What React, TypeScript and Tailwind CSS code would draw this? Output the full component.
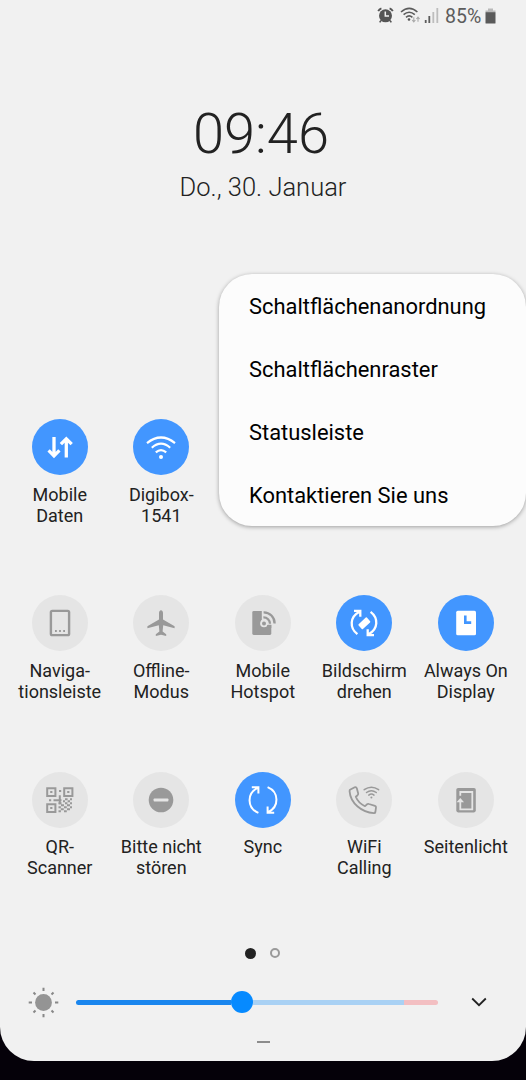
import type { ReactNode } from "react";
import clsx from "clsx";

type Tile = {
  label: string[];
  active?: boolean;
  icon: ReactNode;
};

const GREY = "#999999";
const OFF = "#e5e5e5";
const BLUE = "#4296ff";

const topTiles: Tile[] = [
  {
    label: ["Mobile", "Daten"],
    active: true,
    icon: (
      <g fill="none" stroke="#fff" strokeWidth="3.3">
        <path d="M22 18V37M16.6 31.4L22 36.8L27.4 31.4" />
        <path d="M34.3 38.6V20M28.9 25.2L34.3 19.8L39.7 25.2" />
      </g>
    ),
  },
  {
    label: ["Digibox-", "1541"],
    active: true,
    icon: (
      <g fill="none" stroke="#fff" strokeWidth="2.2">
        <path d="M14 24.2Q28 12.8 42 24.2" />
        <path d="M18.8 28.8Q28 20.6 37.2 28.8" />
        <path d="M22.8 33.4Q28 28.8 33.2 33.4" />
        <circle cx="28" cy="38" r="2" fill="#fff" stroke="none" />
      </g>
    ),
  },
];

const tiles: Tile[] = [
  {
    label: ["Naviga-", "tionsleiste"],
    icon: (
      <g>
        <rect x="18.9" y="15.9" width="18.2" height="24.2" rx="1.4" fill="none" stroke={GREY} strokeWidth="2.4" />
        <path d="M23 36h1.8M27.1 36h1.8M31.2 36h1.8" stroke={GREY} strokeWidth="1.8" />
      </g>
    ),
  },
  {
    label: ["Offline-", "Modus"],
    icon: (
      <path
        fill={GREY}
        d="M28 15.2C29.3 15.2 30 16.6 30 18.2V24.5L41.6 31.2V33.3L30.2 30.3L29.6 36.6L33.2 39.2V41L28 39.8L22.8 41V39.2L26.4 36.6L25.8 30.3L14.4 33.3V31.2L26 24.5V18.2C26 16.6 26.7 15.2 28 15.2Z"
      />
    ),
  },
  {
    label: ["Mobile", "Hotspot"],
    icon: (
      <g fill="none">
        <rect x="17.3" y="16" width="19" height="24" rx="1.4" fill={GREY} />
        <path d="M26.8 15H41V29.8H32Q31.6 32 29 32A3.4 3.4 0 0 1 25.8 27.4L26.8 25Z" fill={OFF} />
        <circle cx="29" cy="28.4" r="3.8" fill={OFF} />
        <circle cx="29" cy="28.4" r="2" fill={GREY} />
        <path d="M28.4 22.4A6.4 6.4 0 0 1 35 28.8" stroke={GREY} strokeWidth="2.3" />
        <path d="M28.6 17.4A10.8 10.8 0 0 1 39.6 28.4" stroke={GREY} strokeWidth="2.3" />
        <path d="M32.2 30H36.3V33H32.2Z" fill={GREY} />
      </g>
    ),
  },
  {
    label: ["Bildschirm", "drehen"],
    active: true,
    icon: (
      <g fill="none" stroke="#fff" strokeWidth="2.3">
        <path d="M21.4 39.2C13.4 33 13.6 22 23.4 16.8M18 15.9H24.3V21.8" />
        <path d="M34.6 16.8C42.6 23 42.4 34 32.6 39.2M38 40.1H31.7V34.2" />
        <path d="M23.2 29.9L30.3 23.1L33.5 26.8L26.4 33.4Z" fill="#fff" strokeWidth="1.6" strokeLinejoin="round" />
      </g>
    ),
  },
  {
    label: ["Always On", "Display"],
    active: true,
    icon: (
      <g>
        <rect x="18.2" y="15.7" width="19.8" height="24.6" rx="1.6" fill="#fff" />
        <path d="M27.3 20.6V27.6H33.2" fill="none" stroke={BLUE} strokeWidth="2.6" />
      </g>
    ),
  },
  {
    label: ["QR-", "Scanner"],
    icon: (
      <g fill="none" stroke={GREY} strokeWidth="2">
        <path d="M15.2 16.2h8.2v7.8h-8.2zM32.2 16.2h8.2v7.8h-8.2zM15.2 32.2h8.2v7.8h-8.2z" />
        <path d="M18.2 20.1h2.2M35.2 20.1h2.2M18.2 36.1h2.2M27 19h2.2M17 28.3h2.2M21.5 28.3h8M27.8 23.2v9M33 27.3h2.6M38 27.3h2" />
        <path d="M31 29.2h2M35.6 29.2h2.4M26.5 31.2h3M33 31.2h2.4M38 31.2h2M29 33.2h3M35 33.2h3M26.5 35.2h2.4M32 35.2h2.8M38 35.2h2M28.8 37.2h3M35 37.2h3M26.5 39.2h2.4M32 39.2h2.8" />
      </g>
    ),
  },
  {
    label: ["Bitte nicht", "stören"],
    icon: (
      <g>
        <circle cx="28" cy="28" r="12.3" fill={GREY} />
        <rect x="20.6" y="26.5" width="14.8" height="3" rx="0.8" fill={OFF} />
      </g>
    ),
  },
  {
    label: ["Sync"],
    active: true,
    icon: (
      <g fill="none" stroke="#fff" strokeWidth="2">
        <path d="M23.4 40.8C11.8 36 11.6 21 22.9 15.9M16.8 15.2H23.4V21.6" />
        <path d="M32.6 15.2C44.2 20 44.4 35 33.1 40.1M39.2 40.8H32.6V34.4" />
      </g>
    ),
  },
  {
    label: ["WiFi", "Calling"],
    icon: (
      <g fill="none" stroke={GREY} strokeWidth="1.8" strokeLinejoin="round" strokeLinecap="round">
        <path d="M14 17.7L18.7 15.3Q20.3 14.8 20.8 16.2L22.2 21.5Q22.4 22.7 21.3 23.5L19.8 24.8Q22.2 31 29 34.2L31 32.3Q31.8 31.6 33 32L39 33.8Q40.2 34.2 40 35.4L39.4 40Q39.2 41.2 37.8 41.1C26 40.4 14.5 31.5 13.6 19.4Q13.5 18.1 14 17.7Z" />
        <g strokeWidth="1.5">
          <path d="M28.2 17.7Q35.4 12.7 42.6 17.7" />
          <path d="M30.5 20.5Q35.4 17 40.3 20.5" />
          <path d="M32.8 23.1Q35.4 21.1 38 23.1" />
        </g>
        <circle cx="35.4" cy="25.4" r="1" fill={GREY} stroke="none" />
      </g>
    ),
  },
  {
    label: ["Seitenlicht"],
    icon: (
      <g>
        <rect x="18.3" y="16" width="19.5" height="24.4" rx="1.8" fill={GREY} />
        <path d="M22.3 23.8V20H34.3V37.3H22.3V29" fill="none" stroke={OFF} strokeWidth="1.8" />
        <path d="M22.3 25.9L26 30.2H18.6Z" fill={OFF} />
      </g>
    ),
  },
];

const menuItems = ["Schaltflächenanordnung", "Schaltflächenraster", "Statusleiste", "Kontaktieren Sie uns"];

const QuickTile = ({ tile }: { tile: Tile }) => (
  <div className="flex flex-col items-center">
    <div className={clsx("size-14 rounded-full", tile.active ? "bg-[#4296ff]" : "bg-[#e5e5e5]")}>
      <svg width="56" height="56" viewBox="0 0 56 56">
        {tile.icon}
      </svg>
    </div>
    <div className="mt-[8.2px] text-center text-[18px] leading-[21px] whitespace-nowrap text-[#222]">
      {tile.label.map((line) => (
        <div key={line}>{line}</div>
      ))}
    </div>
  </div>
);

const StatusBar = () => (
  <div className="flex h-8 items-center justify-end pr-[30px] text-[#5c5c5c]">
    <svg width="62" height="20" viewBox="377 6 62 20" fill="none">
      <circle cx="385.5" cy="15.8" r="6.5" fill="#555" />
      <path d="M378.2 11.2Q379.2 9 381.4 8.3M392.8 11.2Q391.8 9 389.6 8.3" stroke="#555" strokeWidth="1.8" />
      <path d="M381 20.5L379.7 22.4M390 20.5L391.3 22.4" stroke="#555" strokeWidth="1.6" />
      <path d="M385.3 11.5V16H389" stroke="#f1f1f1" strokeWidth="1.5" />
      <g stroke="#5c5c5c" strokeWidth="1.6">
        <path d="M401 12Q409.2 4.8 417.4 12" />
        <path d="M403.6 14.7Q409.2 9.8 414.8 14.7" />
        <path d="M406 17.3Q409.2 14.5 412.4 17.3" />
      </g>
      <circle cx="409" cy="19.5" r="1.3" fill="#555" />
      <path d="M413.8 17.2V21.6M412.2 20L413.8 21.8L415.4 20M418 21.8V17.4M416.4 19L418 17.2L419.6 19" stroke="#aaa" strokeWidth="1.1" />
      <path d="M425.7 20V23M429.3 16V23" stroke="#5c5c5c" strokeWidth="1.8" />
      <path d="M433.3 12V23M437.3 8V23" stroke="#bdbdbd" strokeWidth="1.8" />
    </svg>
    <span className="ml-[6px] w-[36px] pt-[2px] text-[19.5px] leading-none whitespace-nowrap">85%</span>
    <svg className="ml-[4px]" width="11" height="17" viewBox="0 0 11 17">
      <path d="M3 0.5H8V2.5H10.5V5H0.5V2.5H3Z" fill="#b9b9b9" />
      <rect x="0.5" y="4.3" width="10" height="11.2" rx="0.5" fill="#5a5a5a" />
    </svg>
  </div>
);

const Brightness = () => (
  <div className="flex h-[30px] items-center pl-[28px]">
    <svg width="31" height="31" viewBox="0 0 31 31">
      <circle cx="15.5" cy="15.5" r="8.4" fill="#949494" />
      <path
        d="M15.5 0.7V4M15.5 27V30.3M0.7 15.5H4M27 15.5H30.3M5.5 5.5L7.5 7.5M23.5 23.5L25.5 25.5M5.5 25.5L7.5 23.5M23.5 7.5L25.5 5.5"
        stroke="#888"
        strokeWidth="2"
      />
    </svg>
    <div className="ml-[16.5px] flex h-[22px] w-[362px] items-center">
      <div className="h-[4.5px] w-[155px] rounded-l-full bg-[#1a86ee]" />
      <div className="size-[22px] rounded-full bg-[#068aff]" />
      <div className="h-[4.5px] w-[151px] bg-[#a9d1f4]" />
      <div className="h-[4.5px] w-[34px] rounded-r-full bg-[#f3bfc2]" />
    </div>
    <svg className="ml-[33.5px]" width="16" height="10" viewBox="0 0 16 10">
      <path d="M1.2 1.5L8 8.2L14.8 1.5" fill="none" stroke="#222" strokeWidth="1.8" />
    </svg>
  </div>
);

const App = () => {
  return (
    <div className="h-[1080px] w-[526px] overflow-hidden bg-[#050109] font-[Roboto,sans-serif]">
      <div className="relative flex h-[1060.5px] flex-col rounded-b-[34px] bg-[#f1f1f1]">
        <StatusBar />

        <div className="flex h-[387.4px] flex-col items-center pt-[69px] text-[#222]">
          <div className="mr-1 text-[56px] leading-[66px] font-light">09:46</div>
          <div className="mt-[5px] text-[25.5px] leading-[30px] font-light">Do., 30. Januar</div>
        </div>

        <div className="ml-[9px] grid h-[176.1px] w-[507.6px] grid-cols-5">
          {topTiles.map((tile) => (
            <QuickTile key={tile.label.join("")} tile={tile} />
          ))}
        </div>
        <div className="ml-[9px] grid w-[507.6px] auto-rows-[176.5px] grid-cols-5">
          {tiles.map((tile) => (
            <QuickTile key={tile.label.join("")} tile={tile} />
          ))}
        </div>

        <div className="mr-[1px] flex h-[10px] items-center justify-center gap-[14px]">
          <div className="size-[10.5px] rounded-full bg-[#222]" />
          <div className="size-[10px] rounded-full border-2 border-[#9a9a9a]" />
        </div>

        <div className="mt-[29px]">
          <Brightness />
        </div>

        <div className="mx-auto mt-[24px] h-[1.5px] w-[13px] bg-[#8c8c8c]" />

        <div className="absolute top-[274px] right-0 h-[252px] w-[307.5px] rounded-[33px] bg-[#fcfcfc] pt-px pl-[30.5px] shadow-[0_1px_4px_rgba(0,0,0,0.35)]">
          {menuItems.map((item) => (
            <div key={item} className="flex h-[63px] items-center text-[21.9px] leading-[26px] text-black">
              {item}
            </div>
          ))}
        </div>
      </div>
    </div>
  );
};

export default App;
